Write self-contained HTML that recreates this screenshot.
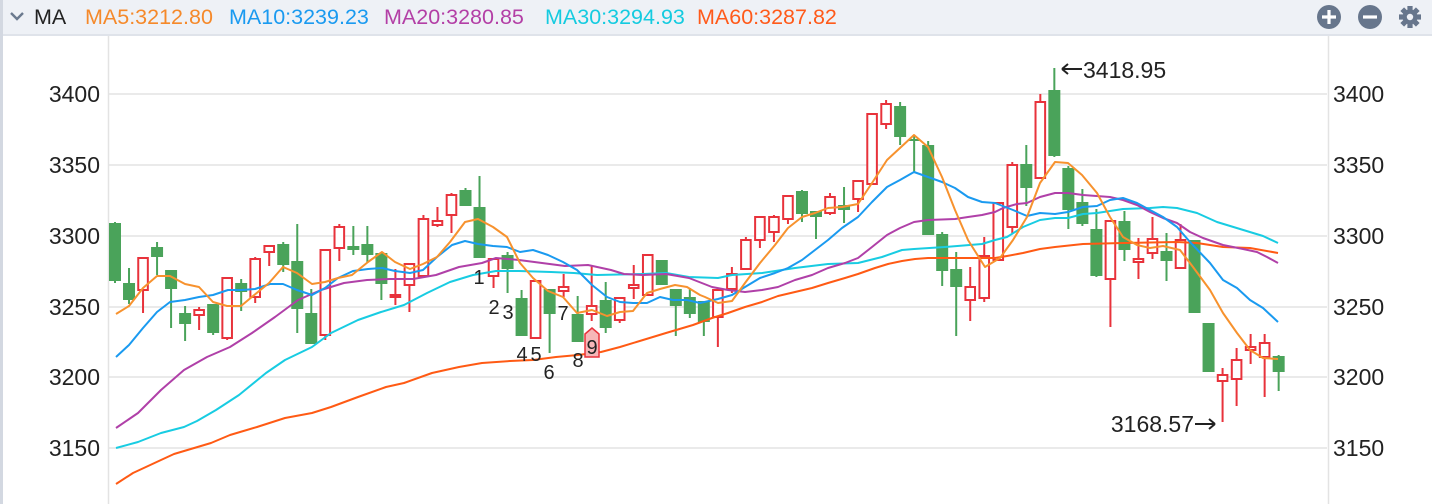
<!DOCTYPE html>
<html><head><meta charset="utf-8">
<style>
html,body{margin:0;padding:0;background:#fff;}
body{width:1432px;height:504px;overflow:hidden;position:relative;font-family:"Liberation Sans",Arial,sans-serif;}
#hdr{position:absolute;left:0;top:0;width:1432px;height:34px;background:#eef1f6;border-bottom:2px solid #dfe3ea;}
#lb{position:absolute;left:0;top:0;width:3px;height:504px;background:#d3d8e1;}
.t{position:absolute;top:5px;font-size:21.5px;line-height:24px;white-space:nowrap;}
</style></head><body>
<div id="hdr"></div>
<div id="lb"></div>
<svg style="position:absolute;left:9px;top:10px" width="16" height="12" viewBox="0 0 16 12"><path d="M2 3 L8 9 L14 3" fill="none" stroke="#6b7a8f" stroke-width="2.4"/></svg>
<div class="t" style="left:34px;color:#222">MA</div>
<div class="t" style="left:85px;color:#f5892a">MA5:3212.80</div>
<div class="t" style="left:229px;color:#1a9af0">MA10:3239.23</div>
<div class="t" style="left:384px;color:#b33fa6">MA20:3280.85</div>
<div class="t" style="left:545px;color:#14cbe0">MA30:3294.93</div>
<div class="t" style="left:697px;color:#ff5a1a">MA60:3287.82</div>
<svg style="position:absolute;left:1310px;top:4px" width="122" height="28" viewBox="1310 4 122 28">
<circle cx="1329" cy="17" r="12" fill="#67768c"/>
<path d="M1322 17 H1336 M1329 10 V24" stroke="#fff" stroke-width="3.2"/>
<circle cx="1370" cy="17" r="12" fill="#67768c"/>
<path d="M1363 17 H1377" stroke="#fff" stroke-width="3.2"/>
<g transform="translate(1410,17)" fill="#67768c">
<circle r="7.5"/>
<rect x="-2.6" y="-11" width="5.2" height="22"/>
<rect x="-2.6" y="-11" width="5.2" height="22" transform="rotate(45)"/>
<rect x="-2.6" y="-11" width="5.2" height="22" transform="rotate(90)"/>
<rect x="-2.6" y="-11" width="5.2" height="22" transform="rotate(135)"/>
<circle r="3.2" fill="#eef1f6"/>
</g>
</svg>
<svg id="ch" style="position:absolute;left:0;top:0" width="1432" height="504" viewBox="0 0 1432 504"></svg>
<script>
var S='';
[94,165,236,307,377,448].forEach(function(y,i){
 S+='<line x1="108" x2="1327" y1="'+y+'" y2="'+y+'" stroke="#e3e3e3" stroke-width="1.5"/>';
 var v=3400-50*i;
 S+='<text x="100" y="'+(y+8)+'" text-anchor="end" font-size="23" fill="#222">'+v+'</text>';
 S+='<text x="1333" y="'+(y+8)+'" font-size="23" fill="#222">'+v+'</text>';
});
S+='<line x1="108.5" x2="108.5" y1="36" y2="504" stroke="#e3e3e3" stroke-width="1.5"/>';
S+='<line x1="1328.5" x2="1328.5" y1="36" y2="504" stroke="#e3e3e3" stroke-width="1.5"/>';
var C=[[222,223,281,283,0],[268,283,300,304,0],[258,258,290,313,1],[242,247,257,275,0],[270,270,289,328,0],[306,313,324,341,0],[307,310,315,330,1],[304,304,333,335,0],[278,278,338,340,1],[279,283,292,311,0],[257,259,297,303,1],[246,246,252,266,1],[242,244,265,272,0],[224,261,309,333,0],[289,313,344,344,0],[250,250,335,340,1],[224,227,248,261,1],[226,246,250,255,0],[226,244,255,263,0],[253,253,284,300,0],[269,295,297,305,1],[264,264,285,312,1],[215,219,276,276,1],[207,221,225,227,1],[193,195,215,233,1],[188,190,206,206,0],[176,207,258,258,0],[259,259,276,288,1],[252,255,269,293,0],[290,298,336,336,0],[281,281,338,338,1],[289,289,314,353,0],[274,287,291,297,1],[296,314,342,342,0],[266,306,314,321,1],[282,300,328,333,0],[298,298,320,323,1],[265,285,288,299,1],[255,255,295,295,1],[260,260,285,285,0],[289,289,306,336,0],[288,297,314,318,0],[301,301,322,336,0],[288,290,317,347,1],[267,274,289,293,1],[237,240,269,269,1],[217,217,240,248,1],[215,217,232,242,1],[195,196,219,224,1],[190,191,214,222,0],[211,211,217,239,0],[193,197,213,215,1],[187,205,210,223,0],[180,181,199,212,1],[114,114,184,184,1],[100,104,124,129,1],[102,106,137,145,0],[135,139,141,172,0],[141,145,235,235,0],[232,234,271,286,0],[252,269,287,336,0],[267,287,300,321,1],[237,256,298,302,1],[202,203,260,260,1],[162,165,227,233,1],[145,164,188,206,0],[94,102,178,178,1],[68,90,156,157,0],[166,168,210,229,0],[189,202,224,226,0],[209,229,276,277,0],[221,221,279,327,1],[211,221,250,261,0],[238,259,262,279,1],[217,239,253,259,1],[233,251,261,281,0],[224,240,268,268,1],[240,240,313,313,0],[323,323,372,372,0],[368,375,381,422,1],[348,360,379,406,1],[334,347,350,364,1],[334,343,357,397,1],[355,356,372,391,0]];
var G='#4aa35a',R='#e8323b';
C.forEach(function(c,i){
 var x=115+14.02*i;
 if(c[4]){
  S+='<line x1="'+x+'" x2="'+x+'" y1="'+c[0]+'" y2="'+c[1]+'" stroke="'+R+'" stroke-width="2"/>';
  S+='<line x1="'+x+'" x2="'+x+'" y1="'+c[2]+'" y2="'+c[3]+'" stroke="'+R+'" stroke-width="2"/>';
  var h=Math.max(c[2]-c[1],2);
  S+='<rect x="'+(x-4.8)+'" y="'+c[1]+'" width="9.6" height="'+h+'" fill="#fff" stroke="'+R+'" stroke-width="2"/>';
 }else{
  S+='<line x1="'+x+'" x2="'+x+'" y1="'+c[0]+'" y2="'+c[3]+'" stroke="'+G+'" stroke-width="2"/>';
  S+='<rect x="'+(x-6)+'" y="'+c[1]+'" width="12" height="'+Math.max(c[2]-c[1],2)+'" fill="'+G+'"/>';
 }
});
function L(p,col,w){S+='<polyline fill="none" stroke="'+col+'" stroke-width="'+(w||2)+'" stroke-linejoin="round" points="'+p+'"/>';}
L('116,484 133,473 161,460 174,454 211,443 230,435 257,427 285,418 312,413 331,407 358,397 386,387 404,383 432,373 459,367 482,363 510,361 533,360 556,357 578,355 601,352 620,347 643,340 666,333 693,325 712,318 728,313 745,307 762,302 778,296 795,292 812,288 828,283 845,278 858,274 875,268 888,264 902,261 915,259 928,258 948,258 995,258 1007,256 1023,253 1040,249 1055,247 1083,244 1123,243 1177,242 1197,243 1223,247 1250,248 1278,253','#ff5a14');
L('116,448 138,442 161,433 184,427 197,421 216,410 239,395 266,373 285,360 312,347 331,333 358,320 381,312 404,305 427,293 450,282 473,275 496,271 519,271 551,272 574,273 597,275 643,274 666,273 689,277 718,278 732,275 762,273 795,268 828,264 858,263 882,257 902,250 914,249 945,247 982,244 995,240 1007,237 1023,227 1040,220 1055,218 1068,218 1083,214 1097,213 1123,209 1150,208 1163,207 1177,208 1197,213 1217,222 1240,229 1263,236 1278,243','#18cce2');
L('116,428 138,413 161,390 184,370 207,357 230,347 252,333 275,317 298,300 321,290 344,283 367,280 390,279 413,279 436,275 459,267 482,263 496,258 519,260 542,263 565,266 588,265 611,270 624,274 643,275 666,274 689,278 712,287 728,290 745,292 762,290 778,287 795,280 812,275 828,268 845,263 858,258 872,247 887,235 900,228 914,222 928,220 955,219 968,217 982,215 995,212 1003,208 1017,204 1027,203 1040,197 1055,193 1068,193 1083,195 1110,197 1123,200 1137,205 1150,212 1163,218 1177,223 1190,232 1203,238 1223,245 1243,249 1257,252 1267,257 1278,263','#b040a8');
L('116,357 129,345 143,328 157,312 170,302 185,300 199,297 213,295 228,290 242,290 255,289 270,284 283,284 297,290 312,295 325,288 338,278 353,271 368,269 382,268 395,271 410,273 423,270 437,257 452,245 465,241 478,244 493,246 507,247 520,252 533,250 548,255 563,262 577,270 592,285 607,297 620,302 633,303 647,303 660,297 673,300 687,300 700,303 718,299 732,295 745,287 760,278 775,273 788,268 802,260 815,250 828,240 842,228 858,217 872,202 887,187 900,180 914,172 928,177 942,182 955,188 968,197 982,202 995,203 1013,210 1027,216 1040,213 1055,214 1068,212 1083,207 1097,206 1110,200 1123,198 1137,203 1150,210 1163,217 1177,227 1190,242 1210,263 1223,280 1237,288 1250,300 1263,308 1278,322','#1a9af0');
L('116,314 129,306 143,288 157,276 170,276 185,284 199,287 213,302 227,306 241,306 253,296 269,283 283,267 297,273 312,284 325,282 338,278 352,275 368,262 382,252 395,262 410,269 423,264 437,257 450,242 465,222 478,219 493,227 507,237 520,263 533,278 548,291 563,297 577,313 592,310 607,316 620,312 633,311 647,293 660,289 675,285 687,287 700,295 705,297 718,303 732,301 745,283 760,263 775,245 788,228 802,217 815,213 828,208 842,207 858,204 872,183 887,160 900,148 914,135 928,147 942,177 955,210 968,240 985,267 1000,258 1013,240 1027,217 1040,183 1055,162 1068,163 1082,175 1097,193 1110,217 1123,237 1137,245 1150,248 1163,246 1180,250 1193,267 1210,290 1223,313 1237,333 1250,350 1263,358 1278,359','#f7922e');
S+='<path d="M585 334 L592 328 L599 334 L599 357 L585 357 Z" fill="#f6b6b8" stroke="#e8323b" stroke-width="1.5"/>';
var lab=[['1',479,284],['2',494,314],['3',508,319],['4',522,361],['5',536,361],['6',549,379],['7',563,320],['8',578,367],['9',592,354]];
lab.forEach(function(l){S+='<text x="'+l[1]+'" y="'+l[2]+'" text-anchor="middle" font-size="20" fill="#222">'+l[0]+'</text>';});
S+='<path d="M1062 69 H1082 M1062 69 l6 -5 M1062 69 l6 5" stroke="#222" stroke-width="2" fill="none"/>';
S+='<text x="1083" y="78" font-size="23" fill="#222">3418.95</text>';
S+='<text x="1194" y="432" text-anchor="end" font-size="23" fill="#222">3168.57</text>';
S+='<path d="M1195 424 H1215 M1215 424 l-6 -5 M1215 424 l-6 5" stroke="#222" stroke-width="2" fill="none"/>';
document.getElementById('ch').innerHTML=S;
</script>
</body></html>
